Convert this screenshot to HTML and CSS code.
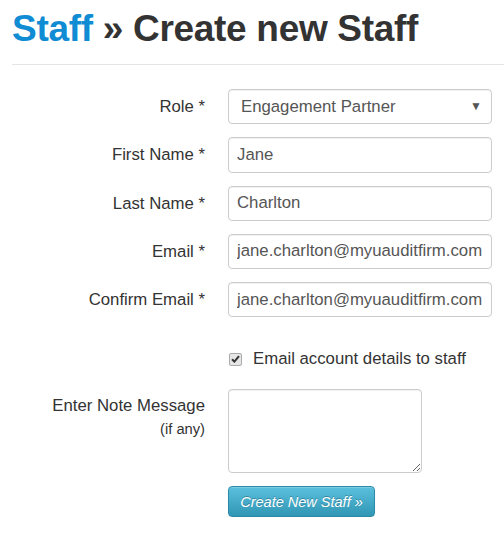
FILE: index.html
```html
<!DOCTYPE html>
<html>
<head>
<meta charset="utf-8">
<link rel="stylesheet" href="styles.css">
</head>
<body>
<div class="page">
  <h1 class="title"><a class="crumb" href="#">Staff</a> » Create new Staff</h1>
  <hr class="rule">
  <form class="form">
    <div class="row">
      <label class="label">Role *</label>
      <div class="control select-wrap">
        <select class="field select">
          <option>Engagement Partner</option>
        </select>
        <span class="arrow">▼</span>
      </div>
    </div>
    <div class="row">
      <label class="label">First Name *</label>
      <div class="control"><input class="field" type="text" value="Jane"></div>
    </div>
    <div class="row">
      <label class="label">Last Name *</label>
      <div class="control"><input class="field" type="text" value="Charlton"></div>
    </div>
    <div class="row">
      <label class="label">Email *</label>
      <div class="control"><input class="field" type="text" value="jane.charlton@myuauditfirm.com"></div>
    </div>
    <div class="row">
      <label class="label">Confirm Email *</label>
      <div class="control"><input class="field" type="text" value="jane.charlton@myuauditfirm.com"></div>
    </div>
    <div class="row check-row">
      <div class="label"></div>
      <label class="control check">
        <span class="box"><svg width="9" height="8" viewBox="0 0 9 8"><path d="M1 4.2 L3.4 6.6 L8 1.2" fill="none" stroke="#333" stroke-width="2"/></svg></span>
        Email account details to staff
      </label>
    </div>
    <div class="row note-row">
      <label class="label note-label">Enter Note Message<br><small class="hint">(if any)</small></label>
      <div class="control"><textarea class="note"></textarea></div>
    </div>
    <div class="row btn-row">
      <div class="label"></div>
      <div class="control"><button class="btn" type="button">Create New Staff »</button></div>
    </div>
  </form>
</div>
</body>
</html>
```
FILE: styles.css
```css
html, body {
  margin: 0;
  padding: 0;
  background: #fff;
}
body {
  font-family: "Liberation Sans", Arial, sans-serif;
  color: #333;
  font-size: 16.75px;
}
.page {
  padding-left: 12px;
}
.title {
  margin: 7px 0 0 0;
  font-size: 37px;
  line-height: 44px;
  font-weight: bold;
  color: #333;
  letter-spacing: -0.3px;
}
.crumb {
  color: #0f8cd3;
  text-decoration: none;
}
.rule {
  margin: 13px 0 0 0;
  border: 0;
  border-top: 1px solid #e5e5e5;
  height: 0;
}
.form {
  margin: 24px 0 0 -12px;
  display: flex;
  flex-direction: column;
  gap: 13px;
}
.row {
  display: flex;
}
.label {
  width: 205px;
  flex: none;
  text-align: right;
  line-height: 35px;
  font-size: 16.75px;
  color: #333;
}
.control {
  margin-left: 23px;
  position: relative;
}
.field {
  box-sizing: border-box;
  width: 264px;
  height: 35.25px;
  border: 1px solid #ccc;
  border-radius: 4px;
  padding: 0 8px;
  font-family: "Liberation Sans", Arial, sans-serif;
  font-size: 16.75px;
  color: #555;
  background: #fff;
  box-shadow: inset 0 1px 1px rgba(0,0,0,0.06);
  outline: none;
  margin: 0;
  display: block;
}
.select {
  -webkit-appearance: none;
  appearance: none;
  padding-left: 12px;
}
.arrow {
  position: absolute;
  right: 10px;
  top: 11px;
  font-size: 12px;
  color: #555;
  line-height: 13px;
  pointer-events: none;
}
.check-row {
  margin-top: 19px;
  margin-bottom: 7px;
}
.check {
  display: flex;
  align-items: center;
  height: 20px;
  font-size: 16.75px;
  color: #333;
}
.box {
  box-sizing: border-box;
  width: 13px;
  height: 13px;
  margin: 0 11px 0 1px;
  border: 1px solid #aaa;
  border-radius: 2px;
  background: #e6e6e6;
  display: flex;
  align-items: center;
  justify-content: center;
}
.note-label {
  line-height: 22px;
  padding-top: 6px;
}
.hint {
  font-size: 14.7px;
  line-height: 24px;
}
.note {
  box-sizing: border-box;
  width: 194px;
  height: 84px;
  border: 1px solid #ccc;
  border-radius: 4px;
  display: block;
  margin: 0;
  box-shadow: inset 0 1px 1px rgba(0,0,0,0.06);
}
.btn {
  box-sizing: border-box;
  width: 147px;
  height: 31px;
  padding: 0;
  margin: 0;
  border: 1px solid #2a8aa8;
  border-radius: 4px;
  background: linear-gradient(to bottom, #5bc0de, #2f96b4);
  color: #fff;
  font-family: "Liberation Sans", Arial, sans-serif;
  font-size: 14.5px;
  font-style: italic;
  text-shadow: 0 -1px 0 rgba(0,0,0,0.25);
  box-shadow: inset 0 1px 0 rgba(255,255,255,0.2), 0 1px 2px rgba(0,0,0,0.05);
}
```
